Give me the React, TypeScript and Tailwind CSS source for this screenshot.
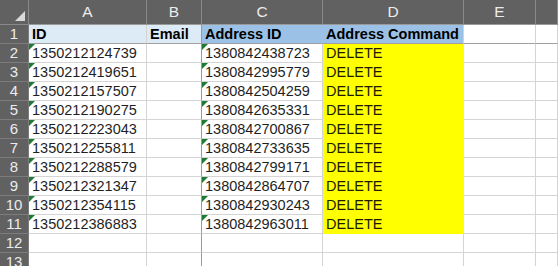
const cols = ["A", "B", "C", "D", "E", ""];

const rows: { id: string; addr: string }[] = [
  { id: "1350212124739", addr: "1380842438723" },
  { id: "1350212419651", addr: "1380842995779" },
  { id: "1350212157507", addr: "1380842504259" },
  { id: "1350212190275", addr: "1380842635331" },
  { id: "1350212223043", addr: "1380842700867" },
  { id: "1350212255811", addr: "1380842733635" },
  { id: "1350212288579", addr: "1380842799171" },
  { id: "1350212321347", addr: "1380842864707" },
  { id: "1350212354115", addr: "1380842930243" },
  { id: "1350212386883", addr: "1380842963011" },
];

function Flag() {
  return (
    <span className="absolute left-0 top-0 w-0 h-0 border-t-[6px] border-r-[6px] border-t-[#1e7b34] border-r-transparent" />
  );
}

function RowHead({ n }: { n: number }) {
  return (
    <div className="bg-[#616161] border-r border-b border-[#7c7c7c] text-[#ececec] text-[15px] flex items-end justify-center leading-[18px]">
      {n}
    </div>
  );
}

function Cell({
  children,
  className = "",
  flag = false,
}: {
  children?: React.ReactNode;
  className?: string;
  flag?: boolean;
}) {
  return (
    <div className={`relative border-r border-b border-[#d4d4d4] flex items-end pl-[3px] leading-[18px] overflow-hidden whitespace-nowrap ${className}`}>
      {flag && <Flag />}
      {children}
    </div>
  );
}

export default function App() {
  return (
    <div
      className="w-[558px] h-[266px] overflow-hidden bg-white text-[14.5px] text-[#1f1f1f]"
      style={{ fontFamily: '"Liberation Sans", Arial, sans-serif' }}
    >
      <div className="grid grid-cols-[29px_118px_55px_121px_141px_72px_1fr] grid-rows-[25px_repeat(13,19px)]">
        {/* column headers */}
        <div className="relative bg-[#616161] border-r border-b border-[#8a8a8a]">
          <span className="absolute right-[3px] bottom-[3px] w-0 h-0 border-b-[10px] border-l-[10px] border-b-[#d9d9d9] border-l-transparent" />
        </div>
        {cols.map((c, i) => (
          <div
            key={i}
            className="bg-[#616161] border-b border-r border-b-[#9a9a9a] border-r-[#8a8a8a] text-[#ececec] text-[15.5px] flex items-end justify-center pb-[1px]"
          >
            {c}
          </div>
        ))}

        {/* row 1 */}
        <RowHead n={1} />
        <Cell className="bg-[#ddebf7] font-bold text-black border-b-[#a0a0a0]">ID</Cell>
        <Cell className="bg-[#ddebf7] font-bold text-black border-b-[#a0a0a0] border-r-[#9a9a9a]">Email</Cell>
        <Cell className="bg-[#9bc2e6] font-bold text-black border-b-[#a0a0a0] border-r-[#9bc2e6]">Address ID</Cell>
        <Cell className="bg-[#9bc2e6] font-bold text-black border-b-[#a0a0a0]">Address Command</Cell>
        <Cell className="border-b-[#a0a0a0]" />
        <Cell className="border-b-[#a0a0a0]" />

        {rows.map((r, i) => (
          <div key={r.id} className="contents">
            <RowHead n={i + 2} />
            <Cell flag>{r.id}</Cell>
            <Cell className="border-r-[#9a9a9a]" />
            <Cell flag>{r.addr}</Cell>
            <Cell className="bg-[#ffff00] border-b-[#ffff00] border-r-[#ffff00] text-[#1c1c00]">DELETE</Cell>
            <Cell />
            <Cell />
          </div>
        ))}

        {[12, 13].map((n) => (
          <div key={n} className="contents">
            <RowHead n={n} />
            <Cell />
            <Cell className="border-r-[#9a9a9a]" />
            <Cell />
            <Cell />
            <Cell />
            <Cell />
          </div>
        ))}
      </div>
    </div>
  );
}
